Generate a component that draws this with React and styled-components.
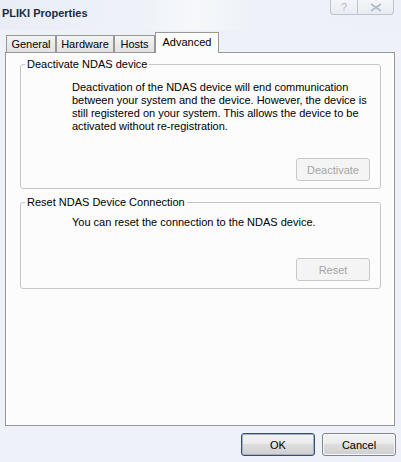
import React from 'react';
import styled, { createGlobalStyle } from 'styled-components';

const GlobalStyle = createGlobalStyle`
  html, body {
    margin: 0;
    padding: 0;
  }
  body {
    width: 401px;
    height: 462px;
    overflow: hidden;
    background: #eef2f8;
    font-family: "Liberation Sans", Arial, sans-serif;
    font-size: 11px;
    color: #000;
  }
`;

const Window = styled.div`
  width: 401px;
  height: 462px;
  display: flex;
  flex-direction: column;
  background: linear-gradient(90deg, #e9eef6 0%, #eef2f8 35%, #f6f8fb 48%, #eef2f8 62%, #edf1f7 100%);
  background-size: 100% 30px;
  background-repeat: no-repeat;
  background-color: #eef2f8;
`;

const TitleBar = styled.div`
  height: 28px;
  display: flex;
  justify-content: space-between;
  align-items: flex-start;
`;

const Title = styled.div`
  padding: 7px 0 0 2px;
  font-size: 11px;
  font-weight: bold;
  color: #1b2a45;
`;

const Caption = styled.div`
  display: flex;
  margin-right: 7px;
`;

const CaptionButton = styled.div`
  width: ${(p) => p.$w}px;
  height: 15px;
  box-sizing: border-box;
  display: flex;
  align-items: center;
  justify-content: center;
  border: 1px solid #bcc4cf;
  border-top: none;
  border-left-width: ${(p) => (p.$first ? 1 : 0)}px;
  border-radius: ${(p) => (p.$first ? '0 0 0 4px' : '0 0 4px 0')};
  background: linear-gradient(#f4f6f9, #e8ecf2);
  color: #b4bcc8;
  font-size: 11px;
`;

const TabRow = styled.div`
  margin-top: 4px;
  padding-left: 6px;
  height: 20px;
  display: flex;
  align-items: flex-end;
  position: relative;
  z-index: 1;
`;

const Tab = styled.div`
  width: ${(p) => p.$w}px;
  height: ${(p) => (p.$active ? 21 : 17)}px;
  box-sizing: border-box;
  border: 1px solid #979797;
  border-bottom: none;
  margin-bottom: ${(p) => (p.$active ? -1 : 0)}px;
  display: flex;
  align-items: center;
  justify-content: center;
  padding-bottom: ${(p) => (p.$active ? 3 : 0)}px;
  background: ${(p) => (p.$active ? '#fcfcfc' : 'linear-gradient(#f4f4f4, #e2e2e2)')};
  color: #000;
`;

const Panel = styled.div`
  margin: 0 6px 0 5px;
  height: 374px;
  box-sizing: border-box;
  border: 1px solid #979797;
  background: #fcfcfc;
  padding: 5px 13px 0 14px;
`;

const Group = styled.fieldset`
  margin: 0 0 ${(p) => p.$gap || 0}px 0;
  border: 1px solid #c3c6cb;
  border-radius: 3px;
  padding: ${(p) => p.$pt}px 10px 7px 8px;
  display: flex;
  flex-direction: column;
  align-items: flex-start;
`;

const Legend = styled.legend`
  margin-left: -4px;
  padding: 0 2px;
  line-height: 13px;
  font-size: 11px;
`;

const Desc = styled.div`
  margin-left: 43px;
  line-height: 13px;
  white-space: nowrap;
`;

const ButtonRow = styled.div`
  align-self: stretch;
  display: flex;
  justify-content: flex-end;
  margin-top: ${(p) => p.$mt}px;
`;

const DisabledButton = styled.div`
  width: 74px;
  height: 23px;
  box-sizing: border-box;
  border: 1px solid #c6c9cc;
  border-radius: 3px;
  background: #f4f4f4;
  color: #a6a6a6;
  display: flex;
  align-items: center;
  justify-content: center;
`;

const Footer = styled.div`
  display: flex;
  justify-content: flex-end;
  gap: 7px;
  padding-right: 5px;
  margin-top: 7px;
`;

const DialogButton = styled.div`
  width: 74px;
  height: 23px;
  box-sizing: border-box;
  border: 1px solid ${(p) => (p.$default ? '#3c4c66' : '#7f858c')};
  border-radius: 3px;
  background: linear-gradient(#f3f3f3 0%, #ebebeb 45%, #dddddd 50%, #cfcfcf 100%);
  box-shadow: inset 0 0 0 1px ${(p) => (p.$default ? '#9fb3cc' : '#f8f8f8')};
  display: flex;
  align-items: center;
  justify-content: center;
  color: #000;
`;

export default function App() {
  return (
    <>
      <GlobalStyle />
      <Window>
        <TitleBar>
          <Title>PLIKI Properties</Title>
          <Caption>
            <CaptionButton $w={28} $first>?</CaptionButton>
            <CaptionButton $w={36}>
              <svg width="12" height="9" viewBox="0 0 12 9">
                <path d="M1 1 L11 8 M11 1 L1 8" stroke="#b4bcc8" strokeWidth="2" fill="none" />
              </svg>
            </CaptionButton>
          </Caption>
        </TitleBar>
        <TabRow>
          <Tab $w={50}>General</Tab>
          <Tab $w={58}>Hardware</Tab>
          <Tab $w={41}>Hosts</Tab>
          <Tab $w={64} $active>Advanced</Tab>
        </TabRow>
        <Panel>
          <Group $pt={10} $gap={7}>
            <Legend>Deactivate NDAS device</Legend>
            <Desc>
              Deactivation of the NDAS device will end communication<br />
              between your system and the device. However, the device is<br />
              still registered on your system. This allows the device to be<br />
              activated without re-registration.
            </Desc>
            <ButtonRow $mt={25}>
              <DisabledButton>Deactivate</DisabledButton>
            </ButtonRow>
          </Group>
          <Group $pt={7}>
            <Legend>Reset NDAS Device Connection</Legend>
            <Desc>You can reset the connection to the NDAS device.</Desc>
            <ButtonRow $mt={29}>
              <DisabledButton>Reset</DisabledButton>
            </ButtonRow>
          </Group>
        </Panel>
        <Footer>
          <DialogButton $default>OK</DialogButton>
          <DialogButton>Cancel</DialogButton>
        </Footer>
      </Window>
    </>
  );
}
